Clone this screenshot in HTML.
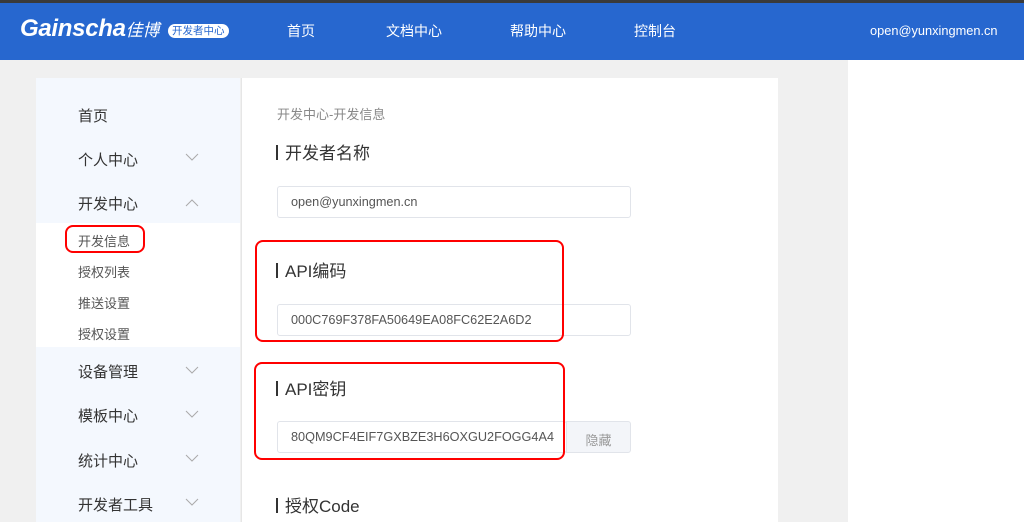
<!DOCTYPE html>
<html><head><meta charset="utf-8"><style>
*{margin:0;padding:0;box-sizing:border-box}
body{width:1024px;height:522px;overflow:hidden;background:#fff;font-family:"Liberation Sans","Noto Sans CJK SC",sans-serif;position:relative}
.a{position:absolute}
.top{left:0;top:0;width:1024px;height:3px;background:#3a3a3a}
.hd{left:0;top:3px;width:1024px;height:57px;background:#2767cf;color:#fff}
.nav{top:18px;font-size:14px;color:#fff}
.gray{left:0;top:60px;width:848px;height:462px;background:#f0f0f0}
.side{left:36px;top:78px;width:204px;height:444px;background:#f4f8fe}
.sub{left:36px;top:223px;width:204px;height:124px;background:#fff}
.main{left:241px;top:78px;width:537px;height:444px;background:#fff;border-left:1px solid #e6e6e6}
.mi{left:78px;font-size:15px;color:#333}
.si{left:78px;font-size:13px;color:#555}
.chev{left:185px;width:14px;height:8px}
.h{left:276px;font-size:17px;color:#333}
.h b{display:inline-block;width:2px;height:15px;background:#333;margin-right:7px;vertical-align:-1px}
.in{left:277px;width:354px;height:32px;border:1px solid #e1e4ea;border-radius:3px;font-size:12.7px;color:#555;padding:8px 0 0 13px;white-space:nowrap;overflow:hidden}
.red{border:2px solid #f00;border-radius:8px}
</style></head><body>
<div class="a top"></div>
<div class="a hd">
<div class="a" style="left:20px;top:12px;font-size:24px;font-weight:bold;font-style:italic;letter-spacing:-0.3px">Gainscha<span style="font-size:17px;font-weight:normal">佳博</span></div>
<div class="a" style="left:168px;top:21px;background:#fff;color:#2767cf;font-size:10.5px;border-radius:8px;padding:0 4px;line-height:14px">开发者中心</div>
<div class="a nav" style="left:287px">首页</div>
<div class="a nav" style="left:386px">文档中心</div>
<div class="a nav" style="left:510px">帮助中心</div>
<div class="a nav" style="left:634px">控制台</div>
<div class="a nav" style="left:870px;font-size:12.8px;top:20px">open@yunxingmen.cn</div>
</div>
<div class="a gray"></div>
<div class="a side"></div>
<div class="a sub"></div>
<div class="a main"></div>
<div class="a mi" style="top:105px">首页</div>
<div class="a mi" style="top:149px">个人中心</div>
<div class="a mi" style="top:193px">开发中心</div>
<div class="a si" style="top:231px">开发信息</div>
<div class="a si" style="top:262px">授权列表</div>
<div class="a si" style="top:293px">推送设置</div>
<div class="a si" style="top:324px">授权设置</div>
<div class="a mi" style="top:361px">设备管理</div>
<div class="a mi" style="top:405px">模板中心</div>
<div class="a mi" style="top:450px">统计中心</div>
<div class="a mi" style="top:494px">开发者工具</div>
<svg class="a chev" style="top:153px" viewBox="0 0 14 8"><path d="M1 1L7 7L13 1" fill="none" stroke="#aaa" stroke-width="1"/></svg>
<svg class="a chev" style="top:199px" viewBox="0 0 14 8"><path d="M1 7L7 1L13 7" fill="none" stroke="#aaa" stroke-width="1"/></svg>
<svg class="a chev" style="top:366px" viewBox="0 0 14 8"><path d="M1 1L7 7L13 1" fill="none" stroke="#aaa" stroke-width="1"/></svg>
<svg class="a chev" style="top:410px" viewBox="0 0 14 8"><path d="M1 1L7 7L13 1" fill="none" stroke="#aaa" stroke-width="1"/></svg>
<svg class="a chev" style="top:454px" viewBox="0 0 14 8"><path d="M1 1L7 7L13 1" fill="none" stroke="#aaa" stroke-width="1"/></svg>
<svg class="a chev" style="top:498px" viewBox="0 0 14 8"><path d="M1 1L7 7L13 1" fill="none" stroke="#aaa" stroke-width="1"/></svg>
<div class="a red" style="left:65px;top:225px;width:80px;height:28px"></div>
<div class="a" style="left:277px;top:104px;font-size:13px;color:#888">开发中心-开发信息</div>
<div class="a h" style="top:139px"><b></b>开发者名称</div>
<div class="a in" style="top:186px">open@yunxingmen.cn</div>
<div class="a h" style="top:257px"><b></b>API编码</div>
<div class="a in" style="top:304px">000C769F378FA50649EA08FC62E2A6D2</div>
<div class="a h" style="top:375px"><b></b>API密钥</div>
<div class="a in" style="top:421px;width:290px">80QM9CF4EIF7GXBZE3H6OXGU2FOGG4A4</div>
<div class="a" style="left:566px;top:421px;width:65px;height:32px;background:#f3f5f9;border:1px solid #e1e4ea;border-radius:0 3px 3px 0;font-size:13px;color:#999;text-align:center;padding-top:8px">隐藏</div>
<div class="a h" style="top:492px"><b></b>授权Code</div>
<div class="a red" style="left:255px;top:240px;width:309px;height:102px"></div>
<div class="a red" style="left:254px;top:362px;width:311px;height:98px"></div>
</body></html>
